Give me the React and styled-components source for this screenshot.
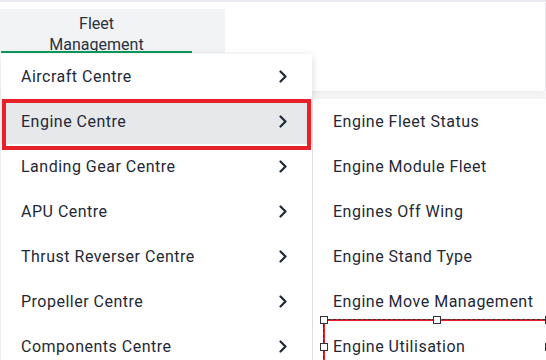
import React from "react";
import styled, { createGlobalStyle } from "styled-components";

const GlobalStyle = createGlobalStyle`
  body {
    margin: 0;
    font-family: Roboto, "Liberation Sans", sans-serif;
    background: #ffffff;
    overflow: hidden;
  }
`;

const Page = styled.div`
  position: relative;
  width: 546px;
  height: 360px;
  overflow: hidden;
  background: #ffffff;
  border-top: 2px solid #e9e9f2;
  box-sizing: border-box;
  padding-top: 1px;
`;

const Header = styled.header`
  position: relative;
  height: 88px;
  background: #ffffff;
  border-right: 1px solid #e6e6ea;
  box-shadow: 0 4px 6px rgba(0, 0, 0, 0.07);
  padding-top: 6px;
  box-sizing: border-box;
`;

const Tab = styled.div`
  width: 225px;
  height: 44px;
  background: #f2f3f5;
  display: flex;
  flex-direction: column;
  align-items: center;
  justify-content: center;
  position: relative;
  color: #283241;
  font-size: 16px;
  line-height: 21px;
  padding: 6px 32px 0 0;
  box-sizing: border-box;
  &::after {
    content: "";
    position: absolute;
    left: 1px;
    bottom: 0;
    width: 191px;
    height: 2px;
    background: #0b9a5c;
  }
`;

const Dropdown = styled.ul`
  position: absolute;
  top: 51px;
  left: 1px;
  width: 311px;
  margin: 0;
  padding: 0;
  list-style: none;
  background: #ffffff;
  box-shadow: 0 2px 8px rgba(0, 0, 0, 0.16);
`;

const SubMenu = styled.ul`
  position: absolute;
  top: 0;
  left: calc(100% + 1px);
  width: 240px;
  margin: 0;
  padding: 0;
  list-style: none;
  background: #ffffff;
  box-shadow: 0 2px 8px rgba(0, 0, 0, 0.16);
`;

const Item = styled.li`
  position: relative;
  height: 45px;
  display: flex;
  align-items: center;
  justify-content: space-between;
  padding: 0 24px 0 20px;
  font-size: 16px;
  letter-spacing: 0.5px;
  white-space: nowrap;
  color: #1f2937;
  background: ${(p) => (p.$active ? "#e7e8ea" : "#ffffff")};
  &::after {
    content: "";
    display: ${(p) => (p.$active ? "block" : "none")};
    position: absolute;
    inset: 0 1px -6px 1px;
    border: 4px solid #e8202a;
    pointer-events: none;
    z-index: 2;
  }
`;

const Chevron = () => (
  <svg width="10" height="13" viewBox="0 0 10 13">
    <polyline
      points="2.5,1.5 7.5,6.5 2.5,11.5"
      fill="none"
      stroke="#1f2937"
      strokeWidth="2.2"
      strokeLinecap="round"
      strokeLinejoin="round"
    />
  </svg>
);

const Selection = styled.div`
  position: absolute;
  inset: -5px 3px -5px 10px;
  border: 2px solid #e8202a;
  outline: 1px dashed #333;
  outline-offset: -1px;
  pointer-events: none;
`;

const Handle = styled.span`
  position: absolute;
  width: 6px;
  height: 6px;
  background: #ffffff;
  border: 1px solid #333;
  left: ${(p) => p.$x};
  top: ${(p) => p.$y};
  transform: translate(-50%, -50%);
`;

const mainItems = [
  "Aircraft Centre",
  "Engine Centre",
  "Landing Gear Centre",
  "APU Centre",
  "Thrust Reverser Centre",
  "Propeller Centre",
  "Components Centre",
];

const subItems = [
  "Engine Fleet Status",
  "Engine Module Fleet",
  "Engines Off Wing",
  "Engine Stand Type",
  "Engine Move Management",
  "Engine Utilisation",
];

const handles = [
  ["-1px", "-1px"],
  ["50%", "-1px"],
  ["calc(100% + 1px)", "-1px"],
  ["-1px", "50%"],
  ["calc(100% + 1px)", "50%"],
];

export default function App() {
  return (
    <>
      <GlobalStyle />
      <Page>
        <Header>
          <Tab>
            <span>Fleet</span>
            <span>Management</span>
          </Tab>
          <Dropdown>
            {mainItems.map((label) => (
              <Item key={label} $active={label === "Engine Centre"}>
                {label}
                <Chevron />
                {label === "Engine Centre" && (
                  <SubMenu>
                    {subItems.map((sub) => (
                      <Item key={sub}>
                        {sub}
                        {sub === "Engine Utilisation" && (
                          <Selection>
                            {handles.map(([x, y]) => (
                              <Handle key={`${x}-${y}`} $x={x} $y={y} />
                            ))}
                          </Selection>
                        )}
                      </Item>
                    ))}
                  </SubMenu>
                )}
              </Item>
            ))}
          </Dropdown>
        </Header>
      </Page>
    </>
  );
}
